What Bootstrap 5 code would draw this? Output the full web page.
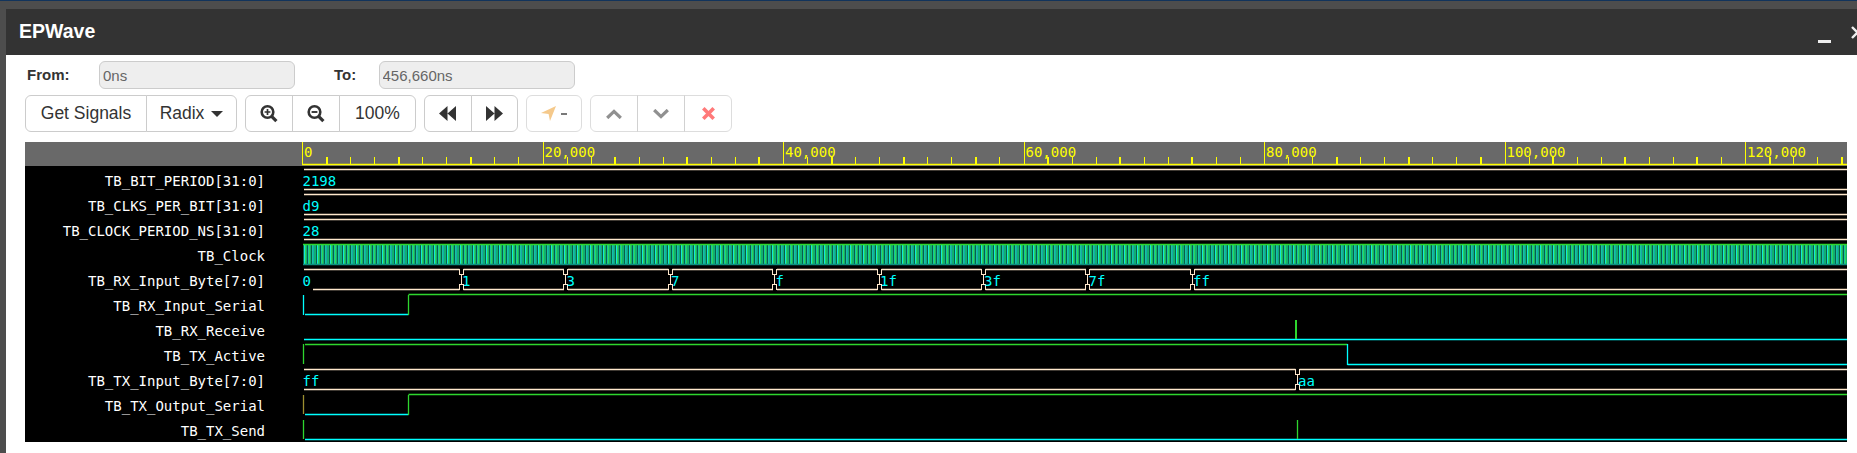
<!DOCTYPE html>
<html lang="en">
<head>
    <meta charset="UTF-8">
    <meta name="viewport" content="width=device-width, initial-scale=1.0">
    <title>EPWave</title>
    <link href="https://cdn.jsdelivr.net/npm/bootstrap@5.3.0/dist/css/bootstrap.min.css" rel="stylesheet">
    <style>
        html, body {
            height: 100%;
            overflow: hidden;
        }
        body {
            background-color: #4d4d4d;
            border-top: 1px solid #12345c;
            font-family: "Liberation Sans", Arial, sans-serif;
            color: #333;
        }
        .ep-window {
            margin: 8px 0 0 6px;
            height: 444px;
            background-color: #fff;
            overflow: hidden;
        }
        .ep-header {
            height: 46px;
            padding-left: 13px;
            background-color: #333;
            color: #fff;
        }
        .ep-title {
            font-size: 19.5px;
            font-weight: 700;
            margin: 0;
        }
        .ep-minimize {
            width: 13px;
            height: 3px;
            margin: 18px 20px 0 0;
            background-color: #eee;
        }
        .ep-close {
            width: 6px;
            height: 13px;
            margin-top: 1px;
            overflow: hidden;
        }
        .ep-close svg {
            display: block;
        }
        .ep-body {
            padding: 6px 10px 0 19px;
        }
        .ep-range {
            height: 28px;
            font-size: 15px;
        }
        .ep-range label {
            font-weight: 700;
            padding-left: 2px;
        }
        .ep-from-label {
            width: 74px;
        }
        .ep-to-label {
            width: 46.5px;
            margin-left: 37px;
        }
        .ep-range input {
            width: 196px;
            height: 28px;
            padding: 0 3px;
            font-size: 15px;
            color: #666;
            background-color: #eee;
            border: 1px solid #ccc;
            border-radius: 6px;
        }
        .ep-toolbar {
            margin-top: 6px;
        }
        .ep-btn {
            --bs-btn-color: #333;
            --bs-btn-bg: #fff;
            --bs-btn-border-color: #ccc;
            --bs-btn-hover-color: #333;
            --bs-btn-hover-bg: #e6e6e6;
            --bs-btn-hover-border-color: #adadad;
            --bs-btn-disabled-color: #333;
            --bs-btn-disabled-bg: #fff;
            --bs-btn-disabled-border-color: #ccc;
            --bs-btn-border-radius: 6px;
            height: 37px;
            padding: 0;
            font-size: 17.5px;
            line-height: 1;
            display: flex;
            align-items: center;
            justify-content: center;
            flex: 0 0 auto;
        }
        .ep-btn.dropdown-toggle::after {
            margin-left: 7px;
            border-top-width: .36em;
            border-left-width: .36em;
            border-right-width: .36em;
        }
        .ep-w-signals { width: 122px; }
        .ep-w-radix { width: 91px; }
        .ep-w-icon { width: 48px; }
        .ep-w-skip { width: 47.5px; }
        .ep-w-pct { width: 77px; }
        .ep-w-marker { width: 56px; }
        .ep-btn svg {
            display: block;
        }
        .ep-dash {
            margin-left: 5px;
            width: 6px;
            height: 2px;
            background-color: #333;
        }
        .ep-wave {
            margin-top: 10px;
            width: 1822px;
            height: 300px;
            background-color: #000;
        }
        .ep-names {
            width: 277px;
            flex: 0 0 auto;
        }
        .ep-names-head {
            height: 24px;
            margin-bottom: 1px;
            background-color: #696969;
        }
        .ep-name {
            height: 25px;
            line-height: 25px;
            padding: 2px 37px 0 0;
            text-align: right;
            font-family: "DejaVu Sans Mono", monospace;
            font-size: 14px;
            color: #fff;
            white-space: pre;
        }
        #plot {
            display: block;
            width: 1545px;
            height: 300px;
            flex: 0 0 auto;
        }
        #plot text {
            font-family: "DejaVu Sans Mono", monospace;
            font-size: 14px;
        }
    </style>
</head>
<body>
    <div class="ep-window">
        <div class="ep-header d-flex align-items-center">
            <h1 class="ep-title">EPWave</h1>
            <div class="ep-minimize ms-auto"></div>
            <div class="ep-close" aria-label="Close">
                <svg width="13" height="13" viewBox="0 0 13 13" fill="none" stroke="#eee" stroke-width="2.4"><path d="M1 1 12 12M12 1 1 12"/></svg>
            </div>
        </div>
        <div class="ep-body">
            <div class="ep-range d-flex align-items-center">
                <label class="ep-from-label">From:</label>
                <input type="text" value="0ns" disabled>
                <label class="ep-to-label">To:</label>
                <input type="text" value="456,660ns" disabled>
            </div>
            <div class="ep-toolbar d-flex gap-2">
                <div class="btn-group">
                    <button class="btn ep-btn ep-w-signals">Get Signals</button>
                    <button class="btn ep-btn ep-w-radix dropdown-toggle">Radix</button>
                </div>
                <div class="btn-group">
                    <button class="btn ep-btn ep-w-icon" aria-label="Zoom in">
                        <svg width="20" height="20" viewBox="0 0 20 20" fill="none" stroke="#333"><circle cx="8.5" cy="8" r="5.8" stroke-width="2.6"/><path d="M12.6 12.4 17.4 17.2" stroke-width="3.2"/><path d="M5.6 8h5.8M8.5 5.1v5.8" stroke-width="1.7"/></svg>
                    </button>
                    <button class="btn ep-btn ep-w-icon" aria-label="Zoom out">
                        <svg width="20" height="20" viewBox="0 0 20 20" fill="none" stroke="#333"><circle cx="8.5" cy="8" r="5.8" stroke-width="2.6"/><path d="M12.6 12.4 17.4 17.2" stroke-width="3.2"/><path d="M5.6 8h5.8" stroke-width="1.9"/></svg>
                    </button>
                    <button class="btn ep-btn ep-w-pct">100%</button>
                </div>
                <div class="btn-group">
                    <button class="btn ep-btn ep-w-skip" aria-label="Previous">
                        <svg width="17" height="15" viewBox="0 0 17 15" fill="#333"><path d="M8.5 0v15L0 7.5zM17 0v15L8.5 7.5z"/></svg>
                    </button>
                    <button class="btn ep-btn ep-w-skip" aria-label="Next">
                        <svg width="17" height="15" viewBox="0 0 17 15" fill="#333"><path d="M0 0v15l8.5-7.5zM8.5 0v15L17 7.5z"/></svg>
                    </button>
                </div>
                <div class="btn-group">
                    <button class="btn ep-btn ep-w-marker" disabled aria-label="Marker">
                        <svg width="15" height="15" viewBox="0 0 15 15" fill="#f0ad4e"><path d="M15 0 9 15 7.6 8 0 7z"/></svg>
                        <span class="ep-dash"></span>
                    </button>
                </div>
                <div class="btn-group">
                    <button class="btn ep-btn ep-w-icon" disabled aria-label="Up">
                        <svg width="16" height="10" viewBox="0 0 16 10" fill="none" stroke="#555" stroke-width="3.2"><path d="M1.2 9 8 2.4 14.8 9"/></svg>
                    </button>
                    <button class="btn ep-btn ep-w-icon" disabled aria-label="Down">
                        <svg width="16" height="10" viewBox="0 0 16 10" fill="none" stroke="#555" stroke-width="3.2"><path d="M1.2 1 8 7.6 14.8 1"/></svg>
                    </button>
                    <button class="btn ep-btn ep-w-icon" disabled aria-label="Remove">
                        <svg width="13" height="13" viewBox="0 0 13 13" fill="none" stroke="#f33" stroke-width="3.6"><path d="M1.3 1.3 11.7 11.7M11.7 1.3 1.3 11.7"/></svg>
                    </button>
                </div>
            </div>
            <div class="ep-wave d-flex">
                <div class="ep-names">
                    <div class="ep-names-head"></div>
                    <div class="ep-name">TB_BIT_PERIOD[31:0]</div>
                    <div class="ep-name">TB_CLKS_PER_BIT[31:0]</div>
                    <div class="ep-name">TB_CLOCK_PERIOD_NS[31:0]</div>
                    <div class="ep-name">TB_Clock</div>
                    <div class="ep-name">TB_RX_Input_Byte[7:0]</div>
                    <div class="ep-name">TB_RX_Input_Serial</div>
                    <div class="ep-name">TB_RX_Receive</div>
                    <div class="ep-name">TB_TX_Active</div>
                    <div class="ep-name">TB_TX_Input_Byte[7:0]</div>
                    <div class="ep-name">TB_TX_Output_Serial</div>
                    <div class="ep-name">TB_TX_Send</div>
                </div>
                <!-- viewBox uses page coordinates so the numbers below read like the screenshot -->
                <svg id="plot" viewBox="302 142 1545 300"></svg>
            </div>
        </div>
    </div>

    <script>
        document.addEventListener("DOMContentLoaded", function () {
            const plot = document.getElementById("plot");
            const RIGHT = 1847;
            const HIGH = "#2ed62e";
            const LOW = "#00ffff";
            const BUS = "#ffe8cc";
            let out = "";

            // soft 1.3px strokes, the source lines are slightly blurred too
            function line(x1, y1, x2, y2, color, width) {
                out += `<line x1="${x1}" y1="${y1}" x2="${x2}" y2="${y2}" stroke="${color}" stroke-width="${width || 1.3}"/>`;
            }
            function tick(x, y1, y2, width) {
                out += `<line x1="${x}" y1="${y1}" x2="${x}" y2="${y2}" stroke="#ff0" stroke-width="${width}" shape-rendering="crispEdges"/>`;
            }
            function label(x, y, str, color) {
                out += `<text x="${x}" y="${y}" fill="${color}">${str}</text>`;
            }

            // ruler
            out += `<rect x="302" y="142" width="1545" height="24" fill="#696969"/>`;
            line(302, 164.5, RIGHT, 164.5, "#ff0", 1.5);
            const step = 240.5;
            for (let i = 0; i < 70; i++) {
                const x = 302.5 + i * step / 10;
                if (x > RIGHT) break;
                if (i % 10 === 0) {
                    tick(x, 142, 165, 1);
                    label(x + 1.5, 157, (i * 2000).toLocaleString("en-US"), "#ff0");
                } else {
                    tick(x, 157, 164, i % 3 === 1 ? 2 : 1);
                }
            }

            // bus signal: values is a list of [x, text]
            function bus(top, values, bottomStart) {
                const bot = top + 20;
                values.forEach(function (v, i) {
                    const from = i === 0 ? 304 : v[0] + 2;
                    const to = i + 1 < values.length ? values[i + 1][0] - 2 : RIGHT;
                    line(from, top + 0.5, to, top + 0.5, BUS);
                    line(i === 0 && bottomStart ? bottomStart : from, bot + 0.5, to, bot + 0.5, BUS);
                    if (i > 0) {
                        const x = v[0];
                        out += `<path fill="none" stroke="${BUS}" shape-rendering="crispEdges" d="M${x - 2.5} ${top}V${top + 5}H${x - 0.5}V${top + 15}H${x - 2.5}V${bot + 1}"/>`;
                        out += `<path fill="none" stroke="${BUS}" shape-rendering="crispEdges" d="M${x + 1.5} ${top}V${top + 5}H${x - 0.5}V${top + 15}H${x + 1.5}V${bot + 1}"/>`;
                    }
                    label(i === 0 ? 302.5 : v[0] + 0.5, top + 17, v[1], "#0ff");
                });
            }

            bus(169, [[302, "2198"]]);
            bus(194, [[302, "d9"]]);
            bus(219, [[302, "28"]]);

            // clock, far too fast to resolve at this zoom so it just shows as stripes
            out += `<rect x="303" y="245" width="1544" height="19" fill="#0fb070"/>`;
            let n = 0;
            for (let x = 303; x < RIGHT; x += 4.34) {
                const p = Math.floor(x);
                out += `<rect x="${p}" y="245" width="1" height="19" fill="#0a5c4c"/>`;
                out += `<rect x="${p + 1}" y="245" width="1" height="19" fill="${n % 3 === 0 ? "#12e8d8" : "#14c8a0"}"/>`;
                out += `<rect x="${p + 2}" y="245" width="1" height="19" fill="${n % 3 === 2 ? "#18a8a8" : "#2ed45a"}"/>`;
                n++;
            }
            line(303, 244.5, RIGHT, 244.5, HIGH);
            line(303, 264.5, RIGHT, 264.5, "#0d8f80");

            const rx = [[302, "0"], [461.5, "1"], [566, "3"], [670.5, "7"], [775, "f"], [879.5, "1f"], [983.5, "3f"], [1088, "7f"], [1192.5, "ff"]];
            bus(269, rx, 313);

            // TB_RX_Input_Serial
            line(303.5, 295, 303.5, 315, LOW);
            line(305, 314.5, 408.5, 314.5, LOW);
            line(408.5, 295, 408.5, 315, HIGH);
            line(408.5, 294.5, RIGHT, 294.5, HIGH);

            // TB_RX_Receive
            line(304, 339.5, RIGHT, 339.5, LOW);
            line(1296, 320, 1296, 339, HIGH, 2);

            // TB_TX_Active
            line(303.5, 344, 303.5, 364, HIGH);
            line(305, 344.5, 1347.5, 344.5, HIGH);
            line(1347.5, 344, 1347.5, 365, LOW);
            line(1347.5, 364.5, RIGHT, 364.5, LOW);

            bus(369, [[302, "ff"], [1297.5, "aa"]]);

            // TB_TX_Output_Serial
            line(303.5, 395, 303.5, 414, "#9c8f30");
            line(305, 414.5, 408.5, 414.5, LOW);
            line(408.5, 395, 408.5, 415, HIGH);
            line(408.5, 394.5, RIGHT, 394.5, HIGH);

            // TB_TX_Send
            line(303.5, 420, 303.5, 439, HIGH);
            line(305, 439.5, RIGHT, 439.5, LOW);
            line(1297.5, 420, 1297.5, 439, HIGH);

            plot.innerHTML = out;
        });
    </script>
    <script src="https://cdn.jsdelivr.net/npm/bootstrap@5.3.0/dist/js/bootstrap.bundle.min.js"></script>
</body>
</html>
